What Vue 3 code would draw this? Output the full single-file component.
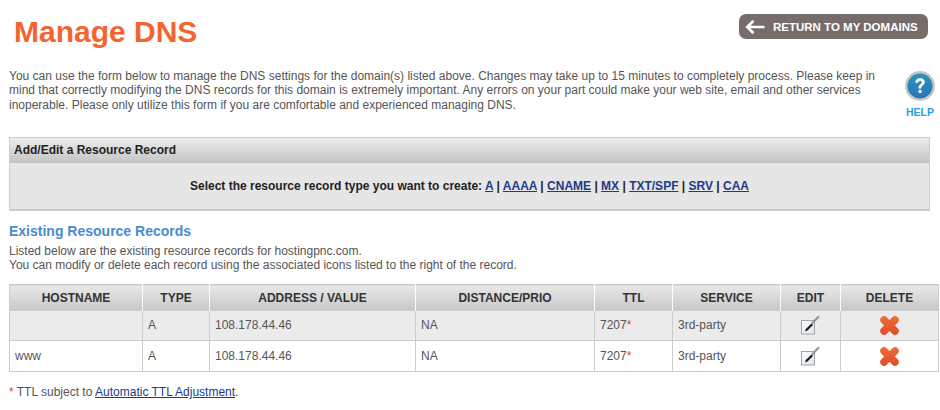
<script setup>
const cols = [
  { label: 'HOSTNAME', w: 133 },
  { label: 'TYPE', w: 67 },
  { label: 'ADDRESS / VALUE', w: 206 },
  { label: 'DISTANCE/PRIO', w: 179 },
  { label: 'TTL', w: 78 },
  { label: 'SERVICE', w: 108 },
  { label: 'EDIT', w: 60 },
  { label: 'DELETE', w: 98 },
]
const rows = [
  { host: '', shaded: true },
  { host: 'www', shaded: false },
]
const types = ['A', 'AAAA', 'CNAME', 'MX', 'TXT/SPF', 'SRV', 'CAA']
</script>

<template>
  <div class="page">
    <header class="top">
      <h1 class="title">Manage DNS</h1>
      <a class="back" href="#">
        <svg class="back-arrow" width="20" height="16" viewBox="0 0 20 16">
          <path d="M8.500 1.800 2.200 8l6.300 6.200M2.500 8H19.500" fill="none" stroke="#fff" stroke-width="2.600" />
        </svg>
        <span>RETURN TO MY DOMAINS</span>
      </a>
    </header>

    <section class="intro">
      <p class="intro-text">You can use the form below to manage the DNS settings for the domain(s) listed above. Changes may take up to 15 minutes to completely process. Please keep in mind that correctly modifying the DNS records for this domain is extremely important. Any errors on your part could make your web site, email and other services inoperable. Please only utilize this form if you are comfortable and experienced managing DNS.</p>
      <a class="help" href="#">
        <svg width="30" height="30" viewBox="0 0 30 30">
          <defs>
            <linearGradient id="helpFill" x1="0" y1="0" x2="0" y2="1">
              <stop offset="0" stop-color="#2b93bd" />
              <stop offset="1" stop-color="#2a74b8" />
            </linearGradient>
          </defs>
          <circle cx="15" cy="15" r="15" fill="#c6c6c6" />
          <circle cx="15" cy="15" r="12.500" fill="url(#helpFill)" />
          <path d="M10.600 11.400c.2-2.600 2-4 4.500-4 2.600 0 4.400 1.500 4.400 3.700 0 3.200-3.500 3.200-3.500 6.200h-2.300c0-3.900 3.300-4 3.300-6 0-1-.8-1.700-1.900-1.700-1.200 0-2 .8-2.100 1.800z" fill="#fff" stroke="#fff" stroke-width=".6" />
          <rect x="13.600" y="19" width="2.900" height="2.900" fill="#fff" />
        </svg>
        <span>HELP</span>
      </a>
    </section>

    <section class="panel">
      <h2 class="panel-head">Add/Edit a Resource Record</h2>
      <div class="panel-body">
        Select the resource record type you want to create:
        <template v-for="(t, i) in types" :key="t">
          <a href="#" class="link">{{ t }}</a><span v-if="i < types.length - 1"> | </span>
        </template>
      </div>
    </section>

    <h3 class="section-title">Existing Resource Records</h3>
    <p class="section-text">Listed below are the existing resource records for hostingpnc.com.<br />You can modify or delete each record using the associated icons listed to the right of the record.</p>

    <table class="records">
      <colgroup>
        <col v-for="c in cols" :key="c.label" :style="{ width: c.w + 'px' }" />
      </colgroup>
      <thead>
        <tr>
          <th v-for="c in cols" :key="c.label">{{ c.label }}</th>
        </tr>
      </thead>
      <tbody>
        <tr v-for="r in rows" :key="r.host" :class="{ shaded: r.shaded }">
          <td>{{ r.host }}</td>
          <td>A</td>
          <td>108.178.44.46</td>
          <td>NA</td>
          <td>7207<span class="star">*</span></td>
          <td>3rd-party</td>
          <td class="icon">
            <svg width="19" height="20" viewBox="0 0 19 20">
              <defs>
                <linearGradient id="pageFill" x1="0" y1="0" x2="1" y2="1">
                  <stop offset="0" stop-color="#fdfefe" />
                  <stop offset="1" stop-color="#dbe4e9" />
                </linearGradient>
              </defs>
              <rect x="0.500" y="5.500" width="13" height="13.500" fill="url(#pageFill)" stroke="#a2a6a8" />
              <path d="M4 16.500 4.800 14 10.500 8.500 12 10 6.500 15.500z" fill="#1a1a1a" />
              <path d="M11 8.500 18 1.200" stroke="#949494" stroke-width="2" fill="none" />
            </svg>
          </td>
          <td class="icon">
            <svg width="19" height="19" viewBox="0 0 19 19">
              <defs>
                <linearGradient id="xFill" gradientUnits="userSpaceOnUse" x1="0" y1="0" x2="0" y2="19">
                  <stop offset="0" stop-color="#ef6c38" />
                  <stop offset="1" stop-color="#de4c27" />
                </linearGradient>
              </defs>
              <path d="M4 4 15 15M15 4 4 15" stroke="url(#xFill)" stroke-width="7.500" stroke-linecap="round" fill="none" />
            </svg>
          </td>
        </tr>
      </tbody>
    </table>

    <p class="foot"><span class="star">*</span> TTL subject to <a href="#" class="link">Automatic TTL Adjustment</a>.</p>
  </div>
</template>

<style scoped>
.page {
  width: 940px;
  height: 410px;
  box-sizing: border-box;
  padding: 14px 0 0 9px;
  overflow: hidden;
  font-family: "Liberation Sans", Arial, sans-serif;
  font-size: 12px;
  color: #555;
  background: #fff;
}
.top {
  display: flex;
  justify-content: space-between;
  align-items: flex-start;
  width: 919px;
  height: 52px;
}
.title {
  margin: 0 0 0 5px;
  font-size: 30px;
  line-height: 36px;
  font-weight: 700;
  color: #f26531;
}
.back {
  display: flex;
  align-items: center;
  gap: 8px;
  box-sizing: border-box;
  width: 189px;
  height: 25px;
  padding-left: 6px;
  border-radius: 7px;
  background: #766c6a;
  color: #fff;
  font-size: 11.5px;
  font-weight: 700;
  text-decoration: none;
}
.back-arrow { flex: none; }
.intro {
  display: flex;
  width: 929px;
  height: 71px;
}
.intro-text {
  margin: 3px 0 0;
  width: 880px;
  line-height: 14.4px;
}
.help {
  display: flex;
  flex-direction: column;
  align-items: center;
  margin: 5px 0 0 16px;
  gap: 5px;
  color: #2a9fdc;
  font-size: 10.500px;
  font-weight: 700;
  text-decoration: none;
}
.panel {
  box-sizing: border-box;
  width: 921px;
  height: 74px;
  border: 1px solid #ccc;
  border-bottom-width: 2px;
  background: #e6e6e6;
}
.panel-head {
  margin: 0;
  height: 25px;
  padding-left: 4px;
  font-size: 12px;
  line-height: 25px;
  font-weight: 700;
  color: #222;
  background: linear-gradient(#ececec, #c4c4c4);
}
.panel-body {
  padding-top: 16px;
  text-align: center;
  font-weight: 700;
  color: #222;
  line-height: 14px;
}
.link { color: #1b3a8c; text-decoration: underline; }
.section-title {
  margin: 12px 0 0;
  font-size: 14px;
  line-height: 16px;
  font-weight: 700;
  color: #4a8bd0;
}
.section-text {
  margin: 5px 0 0;
  line-height: 14px;
}
.records {
  margin-top: 12px;
  width: 929px;
  table-layout: fixed;
  border-collapse: collapse;
  border: 1px solid #ccc;
}
.records th {
  height: 25px;
  padding: 0;
  font-size: 12px;
  font-weight: 700;
  color: #333;
  background: linear-gradient(#e8e8e8, #c8c8c8);
  border-left: 1px solid #fff;
}
.records th:first-child { border-left: 1px solid #ccc; }
.records td {
  height: 30px;
  padding: 0 0 0 5px;
  border: 1px solid #ccc;
}
.records tr.shaded td { height: 28px; padding-bottom: 1px; background: #ebebeb; }
.records td.icon { padding: 0; text-align: center; }
.records td.icon svg { display: block; margin: 0 auto; }
.star { color: #d9472b; }
.foot {
  margin: 13px 0 0;
  line-height: 14px;
}
.foot .link { color: #1b3a8c; }
</style>
